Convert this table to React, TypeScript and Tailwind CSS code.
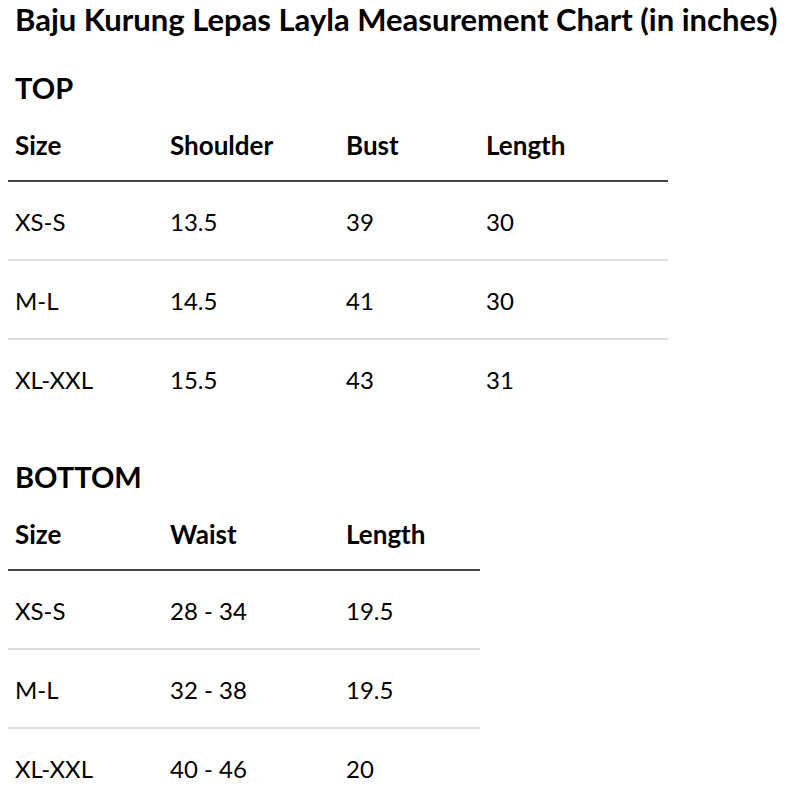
const top = {
  headers: ["Size", "Shoulder", "Bust", "Length"],
  cols: "grid-cols-[155px_176px_140px_189px]",
  rows: [
    ["XS-S", "13.5", "39", "30"],
    ["M-L", "14.5", "41", "30"],
    ["XL-XXL", "15.5", "43", "31"],
  ],
};

const bottom = {
  headers: ["Size", "Waist", "Length"],
  cols: "grid-cols-[155px_176px_141px]",
  rows: [
    ["XS-S", "28 - 34", "19.5"],
    ["M-L", "32 - 38", "19.5"],
    ["XL-XXL", "40 - 46", "20"],
  ],
};

function SizeTable({
  headers,
  cols,
  rows,
}: {
  headers: string[];
  cols: string;
  rows: string[][];
}) {
  return (
    <div className="w-fit">
      <div className={`grid ${cols} h-[76px] items-end border-b-2 border-[#444444] pb-[19px]`}>
        {headers.map((h) => (
          <div key={h} className="px-[7px] text-[26px] font-bold leading-[32px]">
            {h}
          </div>
        ))}
      </div>
      {rows.map((row, r) => (
        <div
          key={r}
          className={`grid ${cols} h-[79px] border-b-2 border-[#dddddd] pt-[25px] last:h-[77px] last:border-b-0`}
        >
          {row.map((cell, i) => (
            <div key={i} className="px-[7px] text-[24px] leading-[30px]">
              {cell}
            </div>
          ))}
        </div>
      ))}
    </div>
  );
}

export default function App() {
  return (
    <div className="min-h-screen bg-white px-[8px] text-black [font-family:Lato,'Liberation_Sans',sans-serif]">
      <h1 className="pl-[7px] text-[31px] font-bold leading-[38px] whitespace-nowrap">
        Baju Kurung Lepas Layla Measurement Chart (in inches)
      </h1>
      <h2 className="mt-[32px] pl-[7px] text-[29px] font-bold leading-[36px]">TOP</h2>
      <SizeTable {...top} />
      <h2 className="mt-[42px] pl-[7px] text-[29px] font-bold leading-[36px]">BOTTOM</h2>
      <SizeTable {...bottom} />
    </div>
  );
}
